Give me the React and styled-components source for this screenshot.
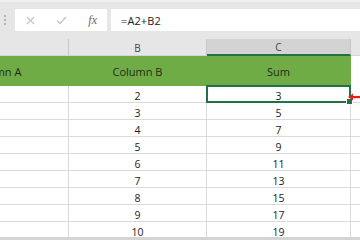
import React from "react";
import styled, { createGlobalStyle } from "styled-components";

const Global = createGlobalStyle`
  html, body { margin: 0; padding: 0; }
  body {
    width: 360px; height: 240px; overflow: hidden;
    background: #e6e6e6;
    font-family: "Open Sans", "Liberation Sans", sans-serif;
  }
`;

const Page = styled.div`
  width: 360px;
  height: 240px;
  overflow: hidden;
  display: flex;
  flex-direction: column;
  background: #e6e6e6;
`;

const FormulaBar = styled.div`
  height: 39px;
  box-sizing: border-box;
  border-top: 2px solid #f0f0f0;
  padding-top: 7px;
  display: flex;
  align-items: flex-start;
`;

const Grip = styled.div`
  width: 15px;
  height: 22px;
  display: flex;
  flex-direction: column;
  align-items: center;
  justify-content: center;
  gap: 2px;
  & > span {
    width: 2px; height: 2px; background: #b4b4b4; display: block;
    margin-left: -6px;
  }
`;

const ActionBox = styled.div`
  width: 92px;
  height: 22px;
  background: #fff;
  display: flex;
  align-items: center;
`;

const Action = styled.div`
  width: 31px;
  display: flex;
  justify-content: center;
  align-items: center;
  color: ${(p) => p.$color};
`;

const Fx = styled.span`
  font-family: "Liberation Serif", serif;
  font-style: italic;
  font-size: 12px;
  color: #6a6a6a;
  margin-left: 2px;
`;

const Input = styled.div`
  flex: 1;
  margin-left: 4px;
  height: 22px;
  background: #fff;
  display: flex;
  align-items: center;
  padding-left: 10px;
  font-size: 11px;
  color: #222;
  letter-spacing: 0.1px;
`;

const SheetClip = styled.div`
  flex: 1;
  overflow: hidden;
  position: relative;
  background: #fff;
`;

const Grid = styled.div`
  display: grid;
  grid-template-columns: 144px 138px 144px 120px;
  margin-left: -75px;
  width: max-content;
`;

const ColHead = styled.div`
  height: 17px;
  box-sizing: border-box;
  background: ${(p) => (p.$active ? "#d3d3d3" : "#e6e6e6")};
  border-right: 1px solid ${(p) => (p.$active ? "#c4c4c4" : "#c8c8c8")};
  border-bottom: ${(p) => (p.$active ? "2px solid #217346" : "1px solid #d6d6d6")};
  display: flex;
  align-items: center;
  justify-content: center;
  font-size: 10px;
  color: #444;
  padding-top: 1px;
`;

const HeadCell = styled.div`
  height: 30px;
  box-sizing: border-box;
  background: ${(p) => (p.$blank ? "#fff" : "#6fac46")};
  border-right: 1px solid ${(p) => (p.$blank ? "#dadada" : "#6fac46")};
  display: flex;
  align-items: center;
  justify-content: center;
  font-size: 11px;
  color: #1f2a18;
`;

const Cell = styled.div`
  height: 17px;
  box-sizing: border-box;
  border-right: 1px solid #dadada;
  border-bottom: 1px solid #dadada;
  display: flex;
  align-items: flex-end;
  justify-content: center;
  padding-bottom: 1px;
  font-size: 10.5px;
  line-height: 1;
  color: #222;
  position: relative;
  ${(p) =>
    p.$selected &&
    `
    &::after {
      content: "";
      position: absolute;
      left: -1px; top: -1px; right: -1px; bottom: -1px;
      border: 2px solid #217346;
      z-index: 2;
    }
    &::before {
      content: "";
      position: absolute;
      right: -3px; bottom: -3px;
      width: 5px; height: 5px;
      background: #217346;
      border: 1px solid #fff;
      z-index: 3;
    }
  `}
`;

const Arrow = styled.svg`
  position: absolute;
  left: 346px;
  top: 54px;
  z-index: 4;
`;

const BottomEdge = styled.div`
  position: absolute;
  left: 0; right: 0; bottom: 0;
  height: 3px;
  background: #d4d4d4;
`;

const rows = [
  [2, 3], [3, 5], [4, 7], [5, 9], [6, 11], [7, 13], [8, 15], [9, 17], [10, 19],
];

export default function App() {
  return (
    <Page>
      <Global />
      <FormulaBar>
        <Grip><span /><span /><span /></Grip>
        <ActionBox>
          <Action $color="#c6c6c6">
            <svg width="9" height="9" viewBox="0 0 9 9">
              <path d="M1 1 L8 8 M8 1 L1 8" stroke="currentColor" strokeWidth="1.3" fill="none" />
            </svg>
          </Action>
          <Action $color="#c6c6c6">
            <svg width="11" height="9" viewBox="0 0 11 9">
              <path d="M1 4.5 L4 7.5 L10 1" stroke="currentColor" strokeWidth="1.4" fill="none" />
            </svg>
          </Action>
          <Action><Fx>fx</Fx></Action>
        </ActionBox>
        <Input>=A2+B2</Input>
      </FormulaBar>
      <SheetClip>
        <Grid>
          <ColHead>A</ColHead>
          <ColHead>B</ColHead>
          <ColHead $active>C</ColHead>
          <ColHead>D</ColHead>
          <HeadCell>Column A</HeadCell>
          <HeadCell>Column B</HeadCell>
          <HeadCell>Sum</HeadCell>
          <HeadCell $blank />
          {rows.map(([b, c], i) => (
            <React.Fragment key={i}>
              <Cell />
              <Cell>{b}</Cell>
              <Cell $selected={i === 0}>{c}</Cell>
              <Cell />
            </React.Fragment>
          ))}
        </Grid>
        <Arrow width="14" height="8" viewBox="0 0 14 8">
          <path d="M2 4 L7 0.5 L7 7.5 Z" fill="#e3211c" />
          <rect x="6" y="3" width="8" height="2.2" fill="#e3211c" />
        </Arrow>
        <BottomEdge />
      </SheetClip>
    </Page>
  );
}
